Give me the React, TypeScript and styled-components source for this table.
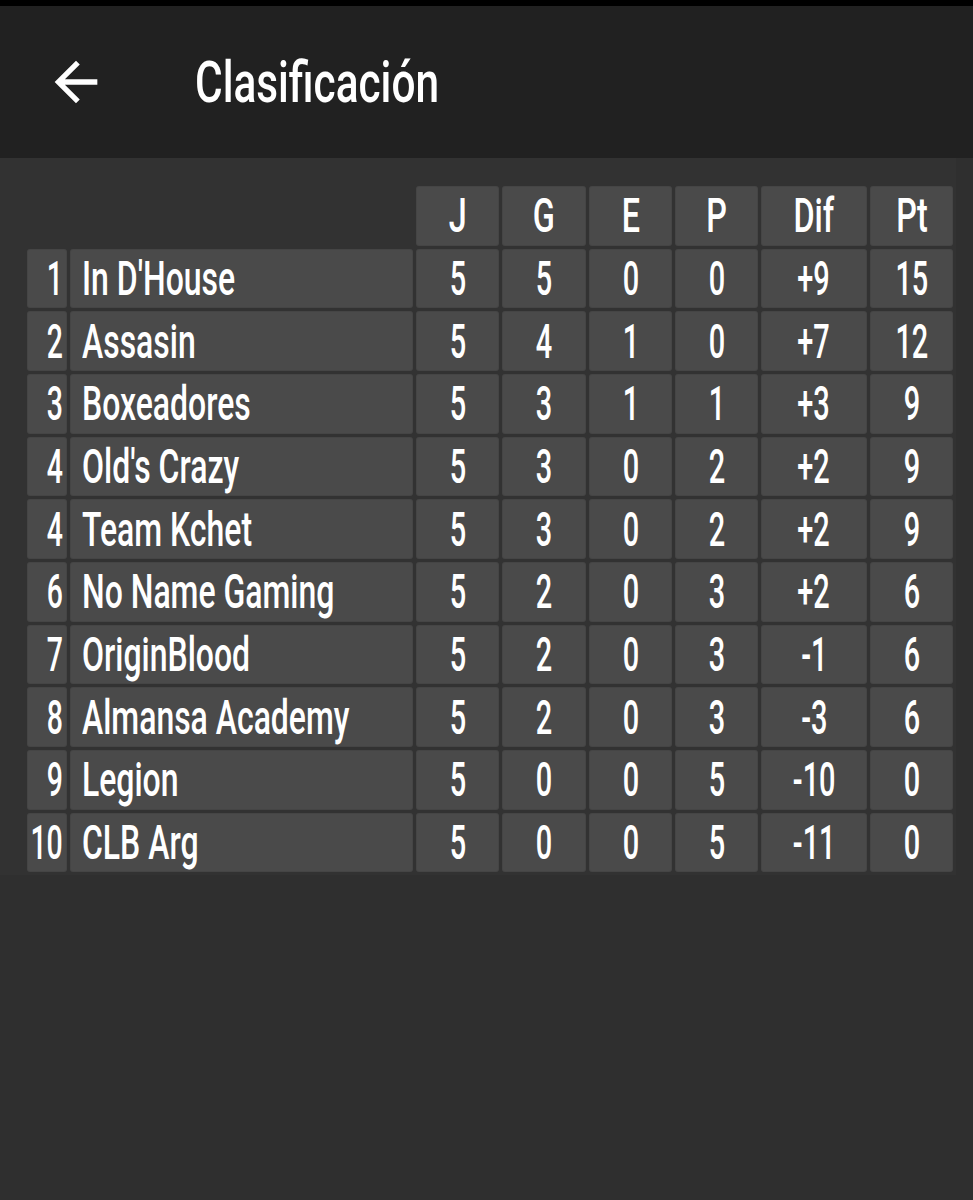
import React from "react";
import styled, { createGlobalStyle } from "styled-components";

type Team = {
  pos: number;
  name: string;
  j: number;
  g: number;
  e: number;
  p: number;
  dif: string;
  pt: number;
};

const teams: Team[] = [
  { pos: 1, name: "In D'House", j: 5, g: 5, e: 0, p: 0, dif: "+9", pt: 15 },
  { pos: 2, name: "Assasin", j: 5, g: 4, e: 1, p: 0, dif: "+7", pt: 12 },
  { pos: 3, name: "Boxeadores", j: 5, g: 3, e: 1, p: 1, dif: "+3", pt: 9 },
  { pos: 4, name: "Old's Crazy", j: 5, g: 3, e: 0, p: 2, dif: "+2", pt: 9 },
  { pos: 4, name: "Team Kchet", j: 5, g: 3, e: 0, p: 2, dif: "+2", pt: 9 },
  { pos: 6, name: "No Name Gaming", j: 5, g: 2, e: 0, p: 3, dif: "+2", pt: 6 },
  { pos: 7, name: "OriginBlood", j: 5, g: 2, e: 0, p: 3, dif: "-1", pt: 6 },
  { pos: 8, name: "Almansa Academy", j: 5, g: 2, e: 0, p: 3, dif: "-3", pt: 6 },
  { pos: 9, name: "Legion", j: 5, g: 0, e: 0, p: 5, dif: "-10", pt: 0 },
  { pos: 10, name: "CLB Arg", j: 5, g: 0, e: 0, p: 5, dif: "-11", pt: 0 },
];

const columns = ["J", "G", "E", "P", "Dif", "Pt"];

const GlobalStyle = createGlobalStyle`
  html, body {
    margin: 0;
    padding: 0;
    background: #2f2f2f;
  }
  body {
    font-family: Roboto, "Noto Sans", sans-serif;
    color: #fff;
  }
`;

function App() {
  return (
    <Page>
      <GlobalStyle />
      <StatusStrip />
      <TopBar>
        <BackIcon viewBox="0 0 24 24">
          <path d="M20 11H7.83l5.59-5.59L12 4l-8 8 8 8 1.41-1.41L7.83 13H20v-2z" />
        </BackIcon>
        <Title>
          <Squeeze $sx={0.73} $origin="left">
            Clasificación
          </Squeeze>
        </Title>
      </TopBar>

      <Panel>
        <Table>
          <Spacer />
          {columns.map((c) => (
            <Cell key={c} $align="center">
              <Squeeze $sx={0.66} $origin="center">
                {c}
              </Squeeze>
            </Cell>
          ))}

          {teams.map((t, i) => (
            <React.Fragment key={i}>
              <Cell $align="flex-end" $pad="0 4px 0 0">
                <Squeeze $sx={0.58} $origin="right">
                  {t.pos}
                </Squeeze>
              </Cell>
              <Cell $align="flex-start" $pad="0 0 0 12px">
                <Squeeze $sx={0.652} $origin="left">
                  {t.name}
                </Squeeze>
              </Cell>
              {[t.j, t.g, t.e, t.p, t.dif, t.pt].map((v, k) => (
                <Cell key={k} $align="center">
                  <Squeeze $sx={0.59} $origin="center">
                    {v}
                  </Squeeze>
                </Cell>
              ))}
            </React.Fragment>
          ))}
        </Table>
      </Panel>
    </Page>
  );
}

export default App;

const Page = styled.div`
  width: 973px;
  min-height: 1200px;
  background: #2f2f2f;
`;

const StatusStrip = styled.div`
  height: 6px;
  background: #000;
`;

const TopBar = styled.header`
  height: 152px;
  background: #212121;
  display: flex;
  align-items: center;
  padding-left: 44px;
  box-sizing: border-box;
`;

const BackIcon = styled.svg`
  width: 64px;
  height: 64px;
  fill: #fff;
  flex: none;
`;

const Title = styled.h1`
  margin: 0 0 0 87px;
  font-size: 58px;
  font-weight: 500;
  line-height: 1;
  white-space: nowrap;
`;

const Panel = styled.section`
  width: 956px;
  box-sizing: border-box;
  background: #323232;
  padding: 28px 3px 3px 27px;
`;

const Table = styled.div`
  display: grid;
  grid-template-columns: 40px 343px 83px 84px 83px 83px 106px 83px;
  grid-auto-rows: 59.67px;
  gap: 3px;
`;

const Spacer = styled.div`
  grid-column: span 2;
`;

const Cell = styled.div<{ $align: string; $pad?: string }>`
  display: flex;
  align-items: center;
  justify-content: ${(p) => p.$align};
  padding: ${(p) => p.$pad || "0"};
  background: #4a4a4a;
  border-radius: 3px;
  box-shadow: inset 0 0 0 1px rgba(0, 0, 0, 0.06);
  font-size: 49px;
  font-weight: 500;
  line-height: 1;
  overflow: hidden;
  white-space: nowrap;
`;

const Squeeze = styled.span<{ $sx: number; $origin: string }>`
  display: inline-block;
  transform: scaleX(${(p) => p.$sx});
  transform-origin: ${(p) => p.$origin} center;
`;
